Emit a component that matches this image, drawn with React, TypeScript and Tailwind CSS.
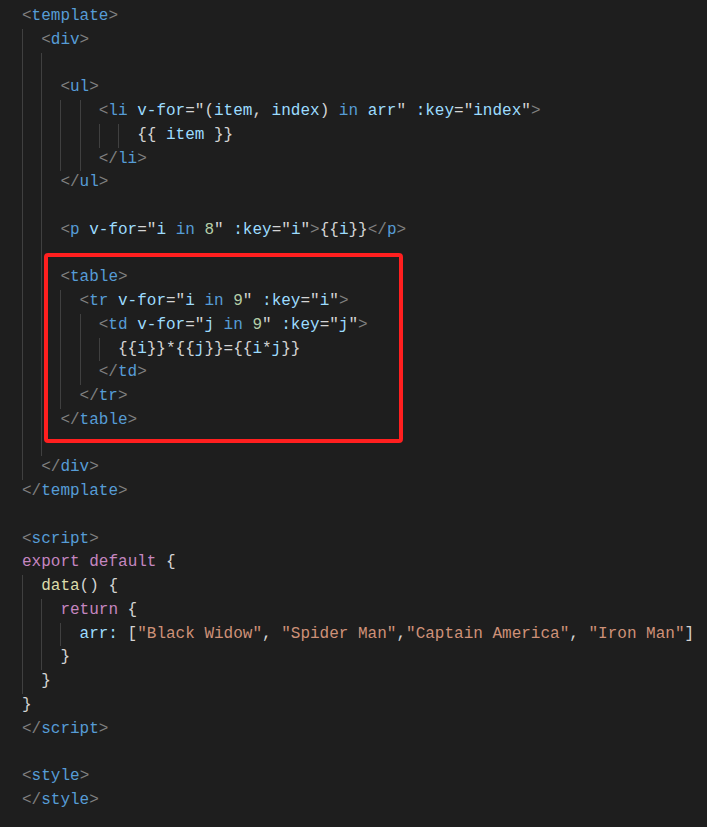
import React from "react";

const C = {
  p: "text-[#808080]",
  t: "text-[#569cd6]",
  a: "text-[#9cdcfe]",
  w: "text-[#d4d4d4]",
  n: "text-[#b5cea8]",
  s: "text-[#ce9178]",
  k: "text-[#c586c0]",
  f: "text-[#dcdcaa]",
};

type Tok = [keyof typeof C, string];
type Line = { g: number; toks: Tok[] };

const open = (name: string): Tok[] => [["p", "<"], ["t", name], ["p", ">"]];
const close = (name: string): Tok[] => [["p", "</"], ["t", name], ["p", ">"]];

const lines: Line[] = [
  { g: 0, toks: open("template") },
  { g: 1, toks: open("div") },
  { g: 2, toks: [] },
  { g: 2, toks: open("ul") },
  {
    g: 4,
    toks: [
      ["p", "<"], ["t", "li"], ["w", " "], ["a", "v-for"], ["w", "=\""], ["w", "("], ["a", "item"], ["w", ", "],
      ["a", "index"], ["w", ") "], ["t", "in"], ["w", " "], ["a", "arr"], ["w", "\" "], ["a", ":key"], ["w", "=\""],
      ["a", "index"], ["w", "\""], ["p", ">"],
    ],
  },
  { g: 6, toks: [["w", "{{ "], ["a", "item"], ["w", " }}"]] },
  { g: 4, toks: close("li") },
  { g: 2, toks: close("ul") },
  { g: 2, toks: [] },
  {
    g: 2,
    toks: [
      ["p", "<"], ["t", "p"], ["w", " "], ["a", "v-for"], ["w", "=\""], ["a", "i"], ["w", " "], ["t", "in"], ["w", " "],
      ["n", "8"], ["w", "\" "], ["a", ":key"], ["w", "=\""], ["a", "i"], ["w", "\""], ["p", ">"], ["w", "{{"], ["a", "i"],
      ["w", "}}"], ["p", "</"], ["t", "p"], ["p", ">"],
    ],
  },
  { g: 2, toks: [] },
  { g: 2, toks: open("table") },
  {
    g: 3,
    toks: [
      ["p", "<"], ["t", "tr"], ["w", " "], ["a", "v-for"], ["w", "=\""], ["a", "i"], ["w", " "], ["t", "in"], ["w", " "],
      ["n", "9"], ["w", "\" "], ["a", ":key"], ["w", "=\""], ["a", "i"], ["w", "\""], ["p", ">"],
    ],
  },
  {
    g: 4,
    toks: [
      ["p", "<"], ["t", "td"], ["w", " "], ["a", "v-for"], ["w", "=\""], ["a", "j"], ["w", " "], ["t", "in"], ["w", " "],
      ["n", "9"], ["w", "\" "], ["a", ":key"], ["w", "=\""], ["a", "j"], ["w", "\""], ["p", ">"],
    ],
  },
  {
    g: 5,
    toks: [
      ["w", "{{"], ["a", "i"], ["w", "}}*{{"], ["a", "j"], ["w", "}}={{"], ["a", "i"], ["w", "*"], ["a", "j"], ["w", "}}"],
    ],
  },
  { g: 4, toks: close("td") },
  { g: 3, toks: close("tr") },
  { g: 2, toks: close("table") },
  { g: 2, toks: [] },
  { g: 1, toks: close("div") },
  { g: 0, toks: close("template") },
  { g: 0, toks: [] },
  { g: 0, toks: open("script") },
  { g: 0, toks: [["k", "export"], ["w", " "], ["k", "default"], ["w", " {"]] },
  { g: 1, toks: [["f", "data"], ["w", "() {"]] },
  { g: 2, toks: [["k", "return"], ["w", " {"]] },
  {
    g: 3,
    toks: [
      ["a", "arr:"], ["w", " ["], ["s", "\"Black Widow\""], ["w", ", "], ["s", "\"Spider Man\""], ["w", ","],
      ["s", "\"Captain America\""], ["w", ", "], ["s", "\"Iron Man\""], ["w", "]"],
    ],
  },
  { g: 2, toks: [["w", "}"]] },
  { g: 1, toks: [["w", "}"]] },
  { g: 0, toks: [["w", "}"]] },
  { g: 0, toks: close("script") },
  { g: 0, toks: [] },
  { g: 0, toks: open("style") },
  { g: 0, toks: close("style") },
];

export default function App() {
  return (
    <div className="min-h-screen w-full bg-[#1e1e1e]">
      <div className="relative pt-[5px] pl-[22px] font-['Liberation_Mono',monospace] text-[16px] leading-[23.75px] whitespace-pre">
        {lines.map((line, i) => (
          <div key={i} className="flex h-[23.75px] items-stretch">
            {Array.from({ length: line.g }).map((_, j) => (
              <span key={j} className="w-[19.2px] shrink-0 border-l border-[#404040]" />
            ))}
            <span>
              {line.toks.map((tk, k) => (
                <span key={k} className={C[tk[0]]}>
                  {tk[1]}
                </span>
              ))}
            </span>
          </div>
        ))}
        <div className="absolute left-[44px] top-[253px] h-[190px] w-[359px] rounded-[4px] border-4 border-[#ff1f1f]" />
      </div>
    </div>
  );
}
